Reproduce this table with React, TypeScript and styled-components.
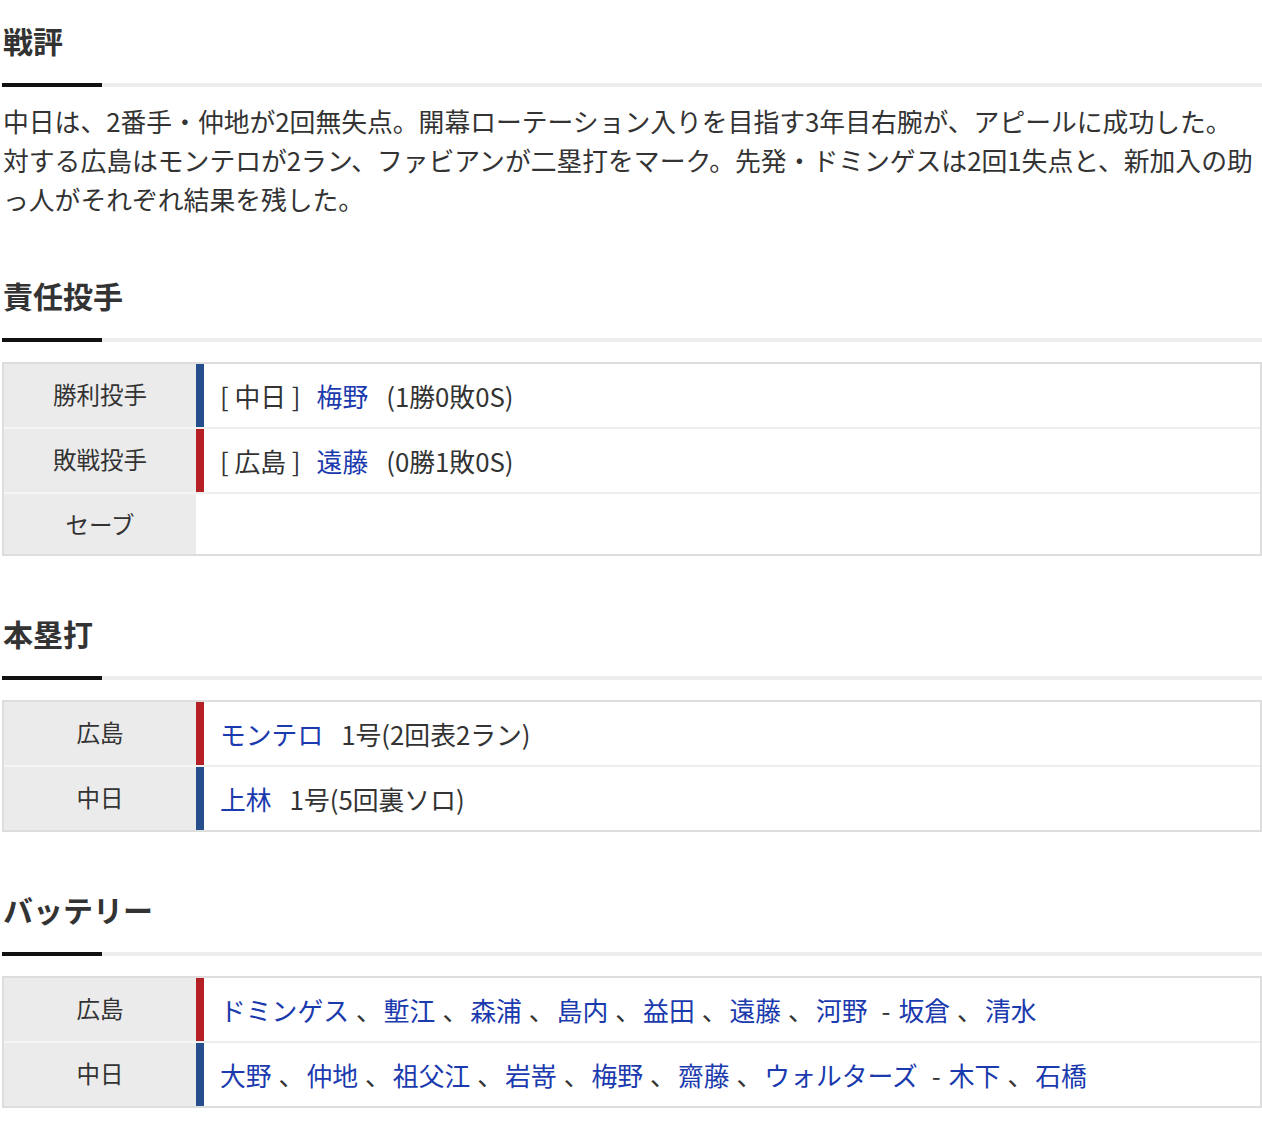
import React from "react";
import styled, { createGlobalStyle } from "styled-components";

const GlobalStyle = createGlobalStyle`
  html, body {
    margin: 0;
    padding: 0;
    background: #fff;
  }
  body {
    font-family: "Noto Sans CJK JP", "Noto Sans", sans-serif;
    color: #333;
  }
`;

const TEAM_COLORS = {
  chunichi: "#264d8c",
  carp: "#b52025",
};

const Page = styled.div`
  padding: 18px 0 20px 2px;
`;

const Section = styled.section`
  & + & {
    margin-top: 55px;
  }
`;

const Heading = styled.h2`
  margin: 0;
  padding-left: 1px;
  font-size: 30px;
  line-height: 45px;
  font-weight: 700;
  color: #333;
`;

const Rule = styled.div`
  margin-top: 20px;
  height: 4px;
  background: #eee;
  display: flex;
  &::before {
    content: "";
    width: 100px;
    background: #111;
  }
`;

const Paragraph = styled.p`
  margin: 14px 0 0;
  padding-left: 1px;
  font-size: 25.8px;
  line-height: 39px;
  line-break: loose;
  color: #333;
`;

const Table = styled.div`
  margin-top: 20px;
  border: 2px solid #ddd;
`;

const Row = styled.div`
  display: grid;
  grid-template-columns: 192px 1fr;
  & + & {
    border-top: 2px solid #eee;
  }
  & + & > :first-child {
    box-shadow: 0 -2px 0 #f5f5f5;
  }
`;

const Label = styled.div`
  background: #ebebeb;
  text-align: center;
  font-size: 23.5px;
  line-height: 36px;
  padding: 12px 0;
  color: #333;
`;

const Value = styled.div<{ $team?: string }>`
  border-left: 8px solid ${(p) => (p.$team ? p.$team : "transparent")};
  padding: 12px 16px;
  font-size: 25.8px;
  line-height: 39px;
  color: #333;
  white-space: nowrap;
`;

const Team = styled.span`
  margin-right: 16px;
`;

const Player = styled.a`
  color: #1a3aae;
  text-decoration: none;
  cursor: pointer;
`;

const Note = styled.span`
  margin-left: 18px;
`;

const Sep = styled.span`
  margin: 0 2px 0 7px;
`;

const Dash = styled.span`
  margin: 0 8px 0 14px;
`;

type Battery = { team: string; color: string; pitchers: string[]; catchers: string[] };

const battery: Battery[] = [
  {
    team: "広島",
    color: TEAM_COLORS.carp,
    pitchers: ["ドミンゲス", "塹江", "森浦", "島内", "益田", "遠藤", "河野"],
    catchers: ["坂倉", "清水"],
  },
  {
    team: "中日",
    color: TEAM_COLORS.chunichi,
    pitchers: ["大野", "仲地", "祖父江", "岩嵜", "梅野", "齋藤", "ウォルターズ"],
    catchers: ["木下", "石橋"],
  },
];

function NameList({ names }: { names: string[] }) {
  return (
    <>
      {names.map((n, i) => (
        <React.Fragment key={n}>
          {i > 0 && <Sep>、</Sep>}
          <Player>{n}</Player>
        </React.Fragment>
      ))}
    </>
  );
}

export default function App() {
  return (
    <Page>
      <GlobalStyle />
      <Section>
        <Heading>戦評</Heading>
        <Rule />
        <Paragraph>
          中日は、2番手・仲地が2回無失点。開幕ローテーション入りを目指す3年目右腕が、アピールに成功した。
          <br />
          対する広島はモンテロが2ラン、ファビアンが二塁打をマーク。先発・ドミンゲスは2回1失点と、新加入の助っ人がそれぞれ結果を残した。
        </Paragraph>
      </Section>

      <Section>
        <Heading>責任投手</Heading>
        <Rule />
        <Table>
          <Row>
            <Label>勝利投手</Label>
            <Value $team={TEAM_COLORS.chunichi}>
              <Team>[ 中日 ]</Team>
              <Player>梅野</Player>
              <Note>(1勝0敗0S)</Note>
            </Value>
          </Row>
          <Row>
            <Label>敗戦投手</Label>
            <Value $team={TEAM_COLORS.carp}>
              <Team>[ 広島 ]</Team>
              <Player>遠藤</Player>
              <Note>(0勝1敗0S)</Note>
            </Value>
          </Row>
          <Row>
            <Label>セーブ</Label>
            <Value />
          </Row>
        </Table>
      </Section>

      <Section>
        <Heading>本塁打</Heading>
        <Rule />
        <Table>
          <Row>
            <Label>広島</Label>
            <Value $team={TEAM_COLORS.carp}>
              <Player>モンテロ</Player>
              <Note>1号(2回表2ラン)</Note>
            </Value>
          </Row>
          <Row>
            <Label>中日</Label>
            <Value $team={TEAM_COLORS.chunichi}>
              <Player>上林</Player>
              <Note>1号(5回裏ソロ)</Note>
            </Value>
          </Row>
        </Table>
      </Section>

      <Section>
        <Heading>バッテリー</Heading>
        <Rule />
        <Table>
          {battery.map((b) => (
            <Row key={b.team}>
              <Label>{b.team}</Label>
              <Value $team={b.color}>
                <NameList names={b.pitchers} />
                <Dash>-</Dash>
                <NameList names={b.catchers} />
              </Value>
            </Row>
          ))}
        </Table>
      </Section>
    </Page>
  );
}
